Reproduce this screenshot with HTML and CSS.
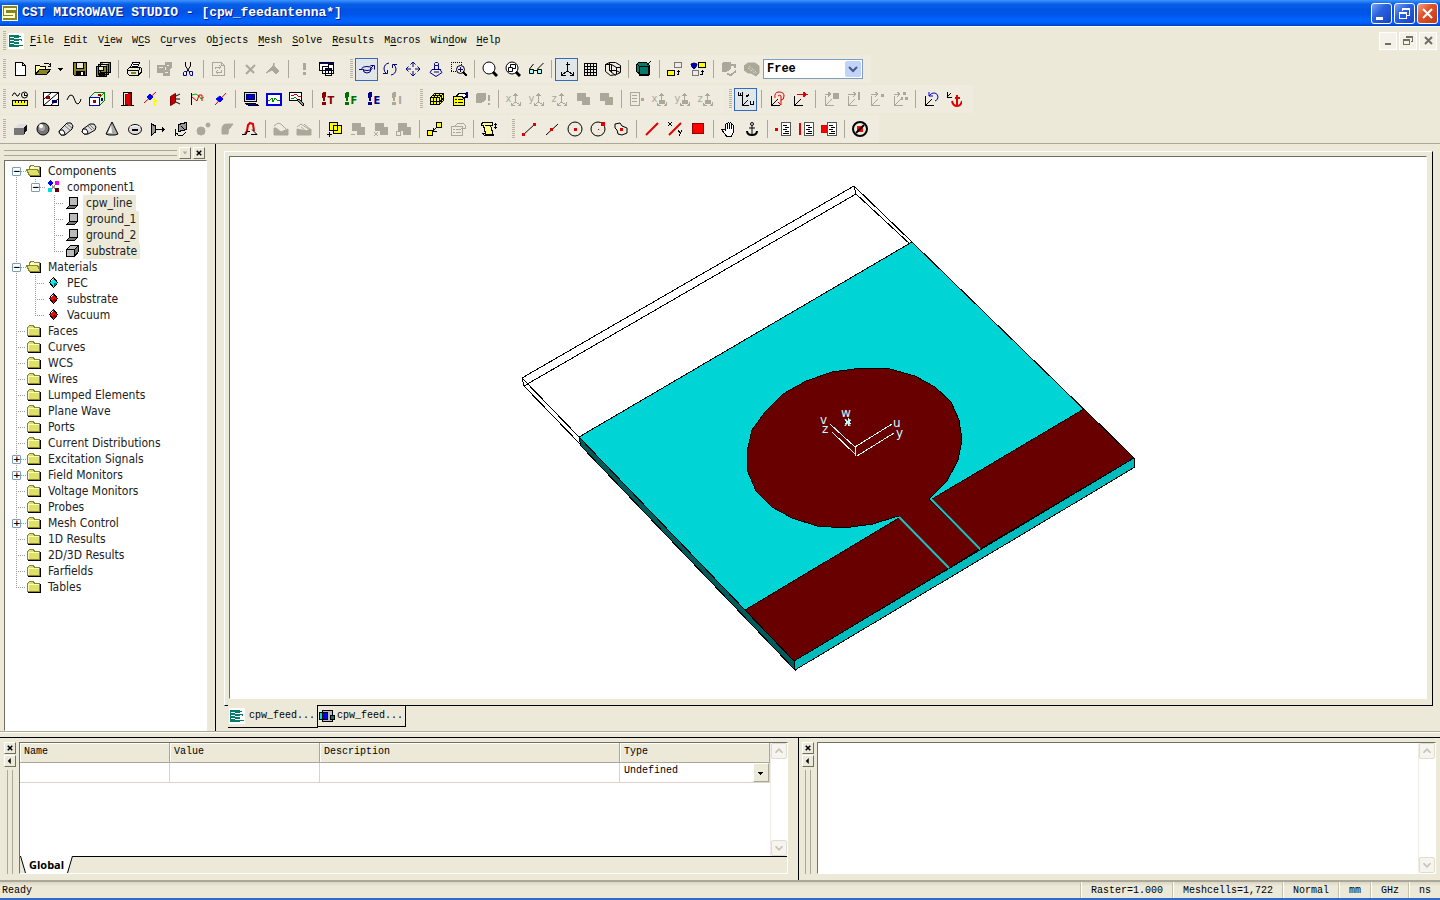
FILE: index.html
```
<!DOCTYPE html>
<html lang="en">
<head>
    <meta charset="UTF-8">
    <meta name="viewport" content="width=device-width, initial-scale=1.0">
    <title>CST MICROWAVE STUDIO - [cpw_feedantenna*]</title>
    <link rel="stylesheet" href="styles.css">
</head>
<body>
    <!-- shared icons -->
    <svg class="defs" width="0" height="0">
        <symbol id="app" viewBox="0 0 16 16"><path fill="#fff" stroke="none" d="M0 0h16v16H0z"/><path fill="#087a6c" stroke="none" d="M1 2h10v12H1z"/><path stroke="#fff" d="M2 4.500h3l2 1h7M2 7.500h3l2 1h5M2 10.500h3l2 1h7"/><path stroke="#087a6c" d="M11 3.500h2M10 6.500h3l1 1M11 12.500h4"/></symbol>
        <symbol id="folder" viewBox="0 0 16 16"><path fill="#dfe06a" stroke="#85852f" d="M1.500 12.500v-8l2-2h4l1 2h5v8z"/><path stroke="#fbfbc0" d="M2.500 11.500v-6h10"/><path stroke="#000" d="M2 13.500h12.500V5"/></symbol>
        <symbol id="open-folder" viewBox="0 0 16 16"><path fill="#fbfbc0" stroke="#85852f" d="M3.500 12.500v-8l1-2h3l1 1h5v9z"/><path fill="#dfe06a" stroke="#85852f" d="M.500 6.500h11l3 6h-11z"/><path stroke="#000" d="M4 13.500h10.500V4"/></symbol>
        <symbol id="sheet" viewBox="0 0 16 16"><path fill="#bbb" d="M5.500 2.500h8v8h-8z"/><path fill="#777" d="M5.500 10.500h8l-3 3h-8z"/></symbol>
        <symbol id="red-gem" viewBox="0 0 16 16"><path fill="#e01010" d="M8.500 2.500l4 5-4 5-4-5z"/><path stroke="#fff" stroke-dasharray="1 1" d="M6 6l2-2"/><path fill="#900" stroke="none" d="M8 8h4l-3 4z"/></symbol>
        <symbol id="axis" viewBox="0 0 16 16"><path d="M9.500 3v8M9.500 11l5 3M9.500 11l-4 3M7.500 5l2-2 2 2M14.500 11v3h-3M5.500 11.500v3h3"/></symbol>
        <symbol id="lcs" viewBox="0 0 16 16"><path d="M2.500 5v9.500H11M2.500 14.500l6-6"/></symbol>
        <symbol id="two-box" viewBox="0 0 16 16"><path fill="#aca899" d="M2.500 2.500h8v7h-8zM7.500 6.500h7v7h-7z"/></symbol>
        <symbol id="page" viewBox="0 0 16 16"><path fill="#fff" stroke="#555" d="M5.500 1.500h9v13h-9z"/><path d="M7 4.500h4M9 6.500h4M7 8.500h4M9 10.500h4M7 12.500h6"/></symbol>
        <symbol id="bang" viewBox="0 0 16 16"><path fill="currentColor" stroke="none" d="M1 3q0-2 2-2t2 2L4 10H2zM1 11h4v3H1z"/></symbol>
        <symbol id="up" viewBox="0 0 16 16"><path stroke="#c5c2b8" stroke-width="2" d="M4 10l4-4 4 4"/></symbol>
        <symbol id="down" viewBox="0 0 16 16"><path stroke="#c5c2b8" stroke-width="2" d="M4 6l4 4 4-4"/></symbol>
    </svg>

    <header class="titlebar">
        <svg class="logo" viewBox="0 0 16 16"><path fill="#8a8424" d="M0 0h16v16H0z"/><path stroke="#ffffc8" stroke-width="2" d="M14 4H3v5h9v3H1"/><path stroke="#ffffc8" d="M.500.500h15v15H.500z"/></svg>
        <h1>CST MICROWAVE STUDIO - [cpw_feedantenna*]</h1>
        <div class="window-buttons">
            <button aria-label="Minimize"><svg viewBox="0 0 19 19"><path fill="#fff" d="M4 13h7v3H4z"/></svg></button>
            <button aria-label="Restore"><svg viewBox="0 0 19 19"><path stroke="#fff" d="M7.500 7V4.500h7v7H12M7 5.500h8M4.500 8.500h7v6h-7zM4 9.500h8"/></svg></button>
            <button class="close" aria-label="Close"><svg viewBox="0 0 19 19"><path class="smooth" stroke="#fff" stroke-width="2" d="M5 5l9 9M14 5l-9 9"/></svg></button>
        </div>
    </header>

    <nav class="menubar">
        <span class="grip"></span>
        <svg class="icon"><use href="#app"/></svg>
        <button><u>F</u>ile</button>
        <button><u>E</u>dit</button>
        <button>V<u>i</u>ew</button>
        <button>W<u>C</u>S</button>
        <button>C<u>u</u>rves</button>
        <button>O<u>b</u>jects</button>
        <button><u>M</u>esh</button>
        <button><u>S</u>olve</button>
        <button><u>R</u>esults</button>
        <button>M<u>a</u>cros</button>
        <button>Win<u>d</u>ow</button>
        <button><u>H</u>elp</button>
        <div class="mdi-buttons">
            <button aria-label="Minimize document"><svg viewBox="0 0 16 16"><path stroke="#716f64" stroke-width="2" d="M5 11h6"/></svg></button>
            <button aria-label="Restore document"><svg viewBox="0 0 16 16"><path stroke="#716f64" d="M6.500 5V3.500h6v5H11M6 4.500h7M3.500 6.500h6v5h-6zM3 7.500h7"/></svg></button>
            <button aria-label="Close document"><svg viewBox="0 0 16 16"><path class="smooth" stroke="#716f64" stroke-width="2" d="M5 4l7 7M12 4l-7 7"/></svg></button>
        </div>
    </nav>

    <div class="toolbars">
        <div class="toolrow">
            <div class="bar">
                <span class="grip"></span>
                <button aria-label="New"><svg class="icon"><path fill="#fff" d="M3.500 1.500h7l3 3v10h-10zM10.500 1.500v3h3"/></svg></button>
                <button aria-label="Open"><svg class="icon"><path fill="#ffff9c" d="M.500 13.500v-9h4l1 1h5v3"/><path fill="#8a8424" d="M.500 13.500l4-5h11l-4 5z"/><path d="M9 3l2-1h2l2 2M15.500 2v3h-3"/></svg></button>
                <button class="drop" aria-label="Open recent"><svg class="arrow" viewBox="0 0 8 8"><path fill="#000" d="M1 3h5L3.500 6z"/></svg></button>
                <button aria-label="Save"><svg class="icon"><path fill="#8a8424" d="M1.500 1.500h13v13h-12l-1-1z"/><path fill="#ece9d8" d="M4.500 1.500h7v6h-7z"/><path fill="#000" d="M4 10h8v4H4z"/><path stroke="#fff" stroke-width="2" d="M10 11v3"/></svg></button>
                <button aria-label="Save all"><svg class="icon"><path fill="#8a8424" d="M5.500 1.500h10v10h-10zM3.500 3.500h10v10h-10zM1.500 5.500h10v10h-10z"/><path fill="#ece9d8" d="M3.500 5.500h5v4h-5z"/><path fill="#ece9d8" stroke="none" d="M8 2h5v1H8zM6 4h5v1H6z"/><path fill="#000" d="M4 12h5v3H4z"/></svg></button>
                <i class="sep"></i>
                <button aria-label="Print"><svg class="icon"><path fill="#fff" d="M4.500 6.500l2-5h7l-2 5z"/><path d="M7 3.500h5M6 5.500h5"/><path fill="#ece9d8" d="M1.500 8.500l2-2h11l-2 3v5h-9l-2-2zM1 9.500h11M12.500 14l3-3V7"/><path stroke="#8a8424" stroke-width="2" d="M5 12h5"/></svg></button>
                <i class="sep"></i>
                <button class="off" disabled aria-label="Paste"><svg class="icon"><path fill="#aca899" stroke="none" d="M0 4h8v8H0zM8 1h7v6l-3 2v1H9zM6 9h7v6H6z"/><path stroke="#efecdf" d="M2 6.500h4M8 11.500h3M10 4.500h2"/></svg></button>
                <button aria-label="Cut"><svg class="icon smooth"><path d="M5.500 1v4l4 6M10.500 1v4l-4 6"/><path stroke="#000084" d="M4.500 10.500h2v4h-3v-3zM9.500 10.500h3v4h-2l-1-2z"/></svg></button>
                <i class="sep"></i>
                <button class="off" disabled aria-label="Update"><svg class="icon"><path d="M1.500 1.500h9l3 3v10h-12zM10.500 1.500v3h3M4.500 8V6h5M8 4l2 2-2 2M10.500 9v2h-5M7 9l-2 2 2 2"/></svg></button>
                <i class="sep"></i>
                <button class="off" disabled aria-label="Delete"><svg class="icon smooth"><path stroke-width="2" d="M4 4l8 8M13 4l-9 9"/></svg></button>
                <button class="off" disabled aria-label="Rename"><svg class="icon smooth"><path fill="#aca899" d="M1 12l7-7 1-3v3l5 5-3 3-4-4z"/></svg></button>
                <i class="sep"></i>
                <button class="off" disabled aria-label="Abort"><svg class="icon"><path stroke-width="3" d="M8.500 2v7M8.500 11v3"/></svg></button>
                <button aria-label="Windows"><svg class="icon"><path fill="#fff" d="M.500 1.500h14v8H.500zM3.500 5.500h6v7h-6zM9.500 3.500h5v9h-5zM6.500 7.500h6v7h-6z"/><path stroke="#000084" d="M1 2.500h13M7 8.500h5"/></svg></button>
            </div>
            <div class="bar">
                <span class="grip"></span>
                <button class="on" aria-label="Rotate"><svg class="icon blue"><ellipse cx="8" cy="7.500" rx="5" ry="2"/><path d="M4 8q0 4 4 4t4-4M0 8.500h3M11 8l4-4M11.500 4.500h4v4"/></svg></button>
                <button aria-label="Rotate in plane"><svg class="icon blue"><path d="M7 2q-5 1-5 6 0 3 3 5M1 12.500h4.500V9M9 14q5-1 5-6 0-3-3-5M15 3.500h-4.500V7"/></svg></button>
                <button aria-label="Pan"><svg class="icon blue"><path d="M8 1v5M8 10v5M1 8h5M10 8h5M5.500 3.500L8 1l2.500 2.500M5.500 12.500L8 15l2.500-2.500M3.500 5.500L1 8l2.500 2.500M12.500 5.500L15 8l-2.500 2.500"/></svg></button>
                <button aria-label="Zoom dynamic"><svg class="icon blue"><path d="M6.500 4.500v-2l1-1h2l1 1v2zM6.500 5v3M10.500 5v3M4 8.500h9M4 8.500l-2 3 6 4 6-4-2-3M6 11h5"/></svg></button>
                <button aria-label="Zoom window"><svg class="icon"><path stroke-dasharray="1 1" d="M0 1.500h11M.500 1v10M0 10.500h5M10.500 1v3"/><circle class="smooth" cx="9.500" cy="8.500" r="4"/><path stroke="#000084" d="M7 8.500h5M9.500 6v5"/><path stroke-width="2" d="M12 11l4 4"/></svg></button>
                <i class="sep"></i>
                <button aria-label="Zoom"><svg class="icon smooth"><circle cx="7" cy="7" r="6" fill="#fff"/><path stroke-width="3" d="M11 11l4 4"/></svg></button>
                <button aria-label="Reset view"><svg class="icon smooth"><circle cx="7" cy="7" r="6" fill="#fff"/><path d="M3.500 6.500h4v4h-4zM5.500 6V3.500h5v4H8"/><path stroke-width="3" d="M11 11l4 4"/></svg></button>
                <button aria-label="View options"><svg class="icon smooth"><path d="M1.500 8l4-5M9.500 8l6-6M6 9.500h3"/><path fill="#9ff" d="M1.500 8.500h4v4h-4zM9.500 8.500h4v4h-4z"/></svg></button>
                <i class="sep"></i>
                <button class="on" aria-label="Axes"><svg class="icon"><path d="M8.500 1v9l-6 4M8.500 10l6 4M6.500 3.500h4M2.500 10.500v3.500h4M14.500 10.500v3.500h-4"/></svg></button>
                <button aria-label="Working plane"><svg class="icon"><path d="M2.500 2v12.500h12V2.500H2M5.500 2v12M8.500 2v12M11.500 2v12M2 5.500h12M2 8.500h12M2 11.500h12"/></svg></button>
                <button aria-label="Wireframe"><svg class="icon smooth"><path d="M.500 3.500l4-2h6l5 3v7l-4 2-6 1-5-4zM.500 3.500h6l5 3v7M4.500 1.500v8l6 5M6.500 3.500v8M4 9.500h7l4 2M11 6.500h4"/></svg></button>
                <i class="sep"></i>
                <button aria-label="Cutting plane"><svg class="icon"><path fill="#087a6c" d="M.500 3.500l2-2h8l3 3v9h-9l-4-3zM3.500 5.500h9v9h-9zM1 3.500l3 2"/><path d="M11 4l4-4"/></svg></button>
                <i class="sep"></i>
                <button aria-label="Transform"><svg class="icon"><path stroke="#777" d="M7.500 1.500h7v5h-7z"/><path fill="#ff0" d="M.500 9.500h7v5h-7z"/><path d="M10 13.500h1.500V9M10 10.500h3"/></svg></button>
                <button aria-label="Assign material"><svg class="icon"><path class="smooth" fill="#00c" stroke="#006" d="M1 3l3-1 3 1-1 3-2 2-2-2z"/><path fill="#ff0" d="M8.500 1.500h7v5h-7z"/><path stroke="#777" d="M2.500 9.500h6v5h-6z"/><path d="M10 13.500h2.500V9M11 10.500h3"/></svg></button>
                <i class="sep"></i>
                <button class="off" disabled aria-label="History"><svg class="icon"><path fill="#aca899" d="M1 3l3-2h5v7l-3 2H1z"/><path stroke-width="2" d="M10 4h4v3M6 13l4 1 5-4"/></svg></button>
                <button class="off" disabled aria-label="Mesh view"><svg class="icon smooth"><path fill="#aca899" d="M0 5l4-3h7l4 3v7l-3 3-5-3H4L0 9z"/><path stroke="#ece9d8" stroke-dasharray="1 1" d="M5 5l8 7M4 7l8 6"/></svg></button>
                <div class="combo">
                    <select aria-label="View"><option>Free</option></select>
                    <span class="combo-arrow"><svg viewBox="0 0 16 16"><path class="smooth" stroke="#445a85" stroke-width="2" d="M4 6l4 4 4-4"/></svg></span>
                </div>
            </div>
        </div>

        <div class="toolrow">
            <div class="bar">
                <span class="grip"></span>
                <button aria-label="Units"><svg class="icon"><path class="smooth" d="M0 5l2-3h1l2 3h1l2-3"/><circle class="smooth" cx="12.500" cy="4" r="3"/><path d="M12.500 2v2h2"/><path fill="#ff0" d="M.500 9.500h15v5H.500z"/><path d="M3.500 10v2M6.500 10v2M9.500 10v2M12.500 10v2"/></svg></button>
                <i class="sep"></i>
                <button aria-label="Background"><svg class="icon"><path fill="#fff" d="M.500 1.500h15v13H.500z"/><path class="smooth" d="M1 14L15 2M1 8l7-6M8 14l7-6"/><path fill="#c00" stroke="#700" d="M3 5h3v2H3z"/><path fill="#006" stroke="#006" d="M9 9h4v2H9z"/></svg></button>
                <button aria-label="Frequency"><svg class="icon"><path class="smooth" d="M1 9l2-4 2-1 2 1 3 7 2 1 2-2 1-3"/></svg></button>
                <button aria-label="Boundaries"><svg class="icon"><path fill="#fff" stroke="#00c" d="M.500 6.500h10v8H.500z"/><path stroke="#080" d="M.500 6.500l5-5h10l-5 5M15.500 1.500v8l-5 5"/><path fill="#900" stroke="#900" d="M4 9h2v2H4zM9 3h2v1H9z"/><path fill="#006" stroke="#006" d="M12 7h1v2h-1z"/></svg></button>
                <i class="sep"></i>
                <button aria-label="Port"><svg class="icon"><path d="M3.500 14V1.500h8V14M1 14.500h13"/><path fill="#e00000" stroke="#900" d="M5.500 3.500l5-1v12l-5-1z"/></svg></button>
                <button aria-label="Discrete port"><svg class="icon"><path class="smooth" stroke="#e00000" d="M1 12L13 1"/><path class="smooth" fill="#00f" stroke="#00f" d="M7 3l3 3-3 3-3-3z"/><path stroke="#ff0" stroke-width="2" d="M11 8l2 2-2 2 1 3"/></svg></button>
                <button aria-label="Lumped element"><svg class="icon smooth"><path fill="#c00000" stroke="#700" d="M4.500 5.500l5-3v9l-5 3z"/><path d="M10 5l4-2M10 8h4M10 11l4 2"/></svg></button>
                <button aria-label="Monitor"><svg class="icon smooth"><path d="M2.500 2v12"/><path stroke="#00b000" d="M3 4l4-1 3 2 2 3 3-2"/><path stroke="#e00000" d="M3 6l5 4 2-6h3v6"/></svg></button>
                <button aria-label="Probe"><svg class="icon smooth"><path stroke="#e00000" d="M3 14L14 2"/><path fill="#00f" stroke="#00f" d="M8 5l3 3-3 3-4-3z"/></svg></button>
                <i class="sep"></i>
                <button aria-label="Solver monitor"><svg class="icon"><path fill="#ddd" d="M1.500 1.500h12v9h-12z"/><path fill="#00c" stroke="#006" d="M3.500 3.500h8v5h-8z"/><path fill="#00c" d="M2.500 12.500h10l3 2h-10z"/></svg></button>
                <button aria-label="Field monitor"><svg class="icon"><path fill="#fff" stroke="#00d" stroke-width="2" d="M1 3h14v11H1z"/><path stroke="#080" d="M2 9h2l2-2 1 4 2-4 2 2h3"/></svg></button>
                <button aria-label="Signal"><svg class="icon"><path fill="#fff" d="M.500 1.500h12v8H.500z"/><path stroke="#c00" d="M2 4h3l2-1 2 2h3"/><path stroke="#080" d="M2 7h3l1-1 2 2h3"/><path fill="#999" d="M8 9l2-1 5 5-1 2z"/></svg></button>
                <i class="sep"></i>
                <button class="solver red" aria-label="Transient solver"><svg class="icon"><use href="#bang"/></svg><b>T</b></button>
                <button class="solver green" aria-label="Frequency solver"><svg class="icon"><use href="#bang"/></svg><b>F</b></button>
                <button class="solver navy" aria-label="Eigenmode solver"><svg class="icon"><use href="#bang"/></svg><b>E</b></button>
                <button class="solver gray" disabled aria-label="Integral solver"><svg class="icon"><use href="#bang"/></svg><b>I</b></button>
            </div>
            <div class="bar">
                <span class="grip"></span>
                <button aria-label="Mesh"><svg class="icon"><path fill="#ff0" d="M1.500 6.500l4-4h9v7l-4 4h-9zM1.500 6.500h9v7M10.500 6.500l4-4M4.500 6.500v7M7.500 6.500v7M2 10.500h9l3-3M4 4.500h9M7.500 2.500l-3 4M11.500 2.500l-4 4M12.500 5v7"/></svg></button>
                <button aria-label="Mesh properties"><svg class="icon"><path fill="#ff0" d="M1.500 5.500h11v9h-11z"/><path d="M3 8.500h2M6 8.500h5M3 11.500h2M6 11.500h5"/><path fill="#fff" d="M4.500 5l3-3h5l3 3-4 2-2-2z"/><path stroke="#000084" stroke-width="2" d="M15 1v6"/></svg></button>
                <button class="off" disabled aria-label="Mesh update"><svg class="icon"><path fill="#aca899" d="M1 4l2-2h7v7l-3 2H1z"/><path stroke-width="2" d="M14 4v6M14 12v2"/></svg></button>
                <i class="sep"></i>
                <button class="off axis" disabled aria-label="X plane"><small>x</small><svg class="icon"><use href="#axis"/></svg></button>
                <button class="off axis" disabled aria-label="Y plane"><small>y</small><svg class="icon"><use href="#axis"/></svg></button>
                <button class="off axis" disabled aria-label="Z plane"><small>z</small><svg class="icon"><use href="#axis"/></svg></button>
                <button class="off" disabled aria-label="Previous plane"><svg class="icon"><use href="#two-box"/></svg></button>
                <button class="off" disabled aria-label="Next plane"><svg class="icon"><use href="#two-box"/></svg></button>
                <i class="sep"></i>
                <button class="off" disabled aria-label="Mesh list"><svg class="icon"><path d="M1.500 1.500h9v13h-9zM3 4.500h5M3 7.500h5M3 10.500h5"/><path stroke-width="3" d="M12 8.500h3"/></svg></button>
                <button class="off axis" disabled aria-label="X fixpoint"><small>x</small><svg class="icon"><use href="#axis"/><path fill="#aca899" d="M7 9h5v3H7z"/></svg></button>
                <button class="off axis" disabled aria-label="Y fixpoint"><small>y</small><svg class="icon"><use href="#axis"/><path fill="#aca899" d="M7 9h5v3H7z"/></svg></button>
                <button class="off axis" disabled aria-label="Z fixpoint"><small>z</small><svg class="icon"><use href="#axis"/><path fill="#aca899" d="M7 9h5v3H7z"/></svg></button>
            </div>
            <div class="bar">
                <span class="grip"></span>
                <button class="on" aria-label="Local WCS"><svg class="icon"><path d="M4.500 5v9.500H11M4.500 14.500l5-5M.500 1v3h4V1M2.500 2v2M8 4l1 2 2-3M12.500 10v3.500h3V10"/></svg></button>
                <i class="sep"></i>
                <button aria-label="Rotate WCS"><svg class="icon"><use href="#lcs"/><path class="smooth" stroke="#e00000" d="M6 7q-1-6 4-6t5 4q0 4-3 4M9 5q3-2 3 1v8M9 11l3 3"/></svg></button>
                <button aria-label="Move WCS"><svg class="icon"><use href="#lcs"/><path fill="#e00000" stroke="#e00000" d="M5 3.500h9M11 1v5l4-2.500z"/></svg></button>
                <i class="sep"></i>
                <button class="off" disabled aria-label="Align WCS face"><svg class="icon"><use href="#lcs"/><path fill="#aca899" d="M10 2h5v5h-5zM2 3.500h5M5 1l3 2-3 3"/></svg></button>
                <button class="off" disabled aria-label="Align WCS edge"><svg class="icon"><use href="#lcs"/><path d="M13.500 1v8M12.500 1v8M2 3.500h7M7 1l3 2-3 3"/></svg></button>
                <button class="off" disabled aria-label="Align WCS point"><svg class="icon"><use href="#lcs"/><path d="M2 3.500h6M6 1l3 2-3 3"/><path fill="#aca899" d="M12 3h2v2h-2z"/></svg></button>
                <button class="off" disabled aria-label="Align WCS three points"><svg class="icon"><use href="#lcs"/><path d="M2 3.500h5M5 1l3 2-3 3"/><path fill="#aca899" d="M11 1h2v2h-2zM13 6h2v2h-2zM9 6h1v2H9z"/></svg></button>
                <i class="sep"></i>
                <button aria-label="Undo WCS"><svg class="icon"><use href="#lcs"/><path class="smooth" stroke="#00d" d="M6 5q3-4 6-3t3 4q0 3-3 4M6 1v4h4"/></svg></button>
                <button aria-label="Anchor WCS"><svg class="icon"><path d="M1.500 1v5.500H6M1 6l4-4"/><path class="smooth" stroke="#e00000" stroke-width="2" d="M11 4v11M9 7h5M6 10q1 5 5 5t5-5"/></svg></button>
            </div>
        </div>

        <div class="toolrow">
            <div class="bar">
                <span class="grip"></span>
                <button aria-label="Brick"><svg class="icon"><path fill="#ddd" stroke="none" d="M2 7l4-4h9l-3 4z"/><path fill="#777" stroke="none" d="M2 7h10v7H2z"/><path fill="#111" stroke="none" d="M12 7l3-4v6l-3 5z"/></svg></button>
                <button aria-label="Sphere"><svg class="icon smooth"><circle cx="8" cy="8" r="6" fill="#777"/><circle cx="7" cy="7" r="3" fill="#aaa" stroke="none"/><circle cx="6" cy="5" r="2" fill="#fff" stroke="none"/></svg></button>
                <button aria-label="Cylinder"><svg class="icon smooth"><path fill="#ddd" d="M2 9l7-7 4 0 2 3-1 3-7 6-4 0-2-3z"/><path stroke="#777" d="M7 5l5 4M9 3l5 4"/><path fill="#fff" d="M2 9h3l2 3-1 2H3l-2-3z"/></svg></button>
                <button aria-label="Elliptical cylinder"><svg class="icon smooth"><path fill="#ddd" d="M2 8l7-5 4 0 2 3-1 3-7 4-4 0-2-2z"/><path stroke="#777" d="M7 5l4 4M9 4l4 4"/><path fill="#fff" d="M2 8h3l2 3-1 2H3l-2-2z"/></svg></button>
                <button aria-label="Cone"><svg class="icon smooth"><path fill="#aaa" d="M8 1L2 13l3 1h6l3-1z"/><path fill="#fff" stroke="none" d="M7 4L4 12h4z"/></svg></button>
                <button aria-label="Torus"><svg class="icon smooth"><ellipse cx="8" cy="8.500" rx="6.500" ry="5" fill="#ddd"/><path stroke-width="2" d="M5 9h6"/><path stroke="#fff" d="M3 6q5-3 10 0"/></svg></button>
                <button aria-label="Extrude"><svg class="icon"><path fill="#999" d="M1.500 3v11l4-3V5z"/><path d="M5 8.500h9"/><path fill="#000" d="M12.500 6.500v4l2-2z"/></svg></button>
                <button aria-label="Rotate profile"><svg class="icon"><path fill="#999" d="M5.500 3.500l8-2v7l-8 2z"/><path d="M3 8l-1 3 3 3h5l3-3M2 15v-3h3M8 5l3 3"/></svg></button>
                <button class="off" disabled aria-label="Loft"><svg class="icon smooth"><circle cx="5" cy="10" r="4" fill="#aca899"/><circle cx="12" cy="4" r="2" fill="#aca899"/></svg></button>
                <button class="off" disabled aria-label="Bend"><svg class="icon smooth"><path fill="#aca899" d="M3 8q0-5 5-5h6l-3 4q-2 0-2 6H3z"/></svg></button>
                <button aria-label="Bond wire"><svg class="icon smooth"><path stroke="#e00000" stroke-width="2" d="M3 13l2-3 1-6 2-2 3 1 1 7"/><path d="M0 13.500h4l1-3h3M10 8.500l5 5h-6"/></svg></button>
                <i class="sep"></i>
                <button class="off" disabled aria-label="Chamfer"><svg class="icon smooth"><path fill="#aca899" d="M1 7h2l5 4 7-3v6H1z"/><path d="M1 5l4-3 3 1 5 5"/></svg></button>
                <button class="off" disabled aria-label="Blend"><svg class="icon smooth"><path fill="#aca899" d="M1 8l9 2 5-2v6H1z"/><path d="M1 6l4-3 9 6M5 6l6 5M8 3l6 5"/></svg></button>
                <i class="sep"></i>
                <button aria-label="Boolean add"><svg class="icon"><path fill="#ff0" d="M2.500 1.500h8v8h-8zM6.500 4.500h8v8h-8z"/><path d="M6.500 4.500h4v5h-4zM0 13.500h5M2.500 11v5"/></svg></button>
                <button class="off" disabled aria-label="Boolean subtract"><svg class="icon"><use href="#two-box"/><path d="M1 13.500h4"/></svg></button>
                <button class="off" disabled aria-label="Boolean intersect"><svg class="icon"><use href="#two-box"/><path d="M1 11l4 4M5 11l-4 4"/></svg></button>
                <button class="off" disabled aria-label="Boolean insert"><svg class="icon"><use href="#two-box"/><path d="M.500 10.500h4v4h-4z"/></svg></button>
                <i class="sep"></i>
                <button aria-label="Transform shape"><svg class="icon"><path fill="#ff0" d="M.500 9.500h5v5h-5zM9.500 1.500h5v5h-5z"/><path d="M6 9.500l3-2M6.500 7v3h3"/></svg></button>
                <button class="off" disabled aria-label="Shape properties"><svg class="icon"><path d="M1.500 5.500h11v9h-11zM3 8.500h2M6 8.500h5M3 11.500h2M6 11.500h5M5 5l3-3h5l2 2v3h-4"/></svg></button>
                <i class="sep"></i>
                <button aria-label="History list"><svg class="icon"><path fill="#ff8" d="M.500 2.500l2-1h9v3h-2l3 10h-9l-2-2h3l-2-8h-2z"/><path d="M4 4.500h6M4 13.500h8M14.500 2v6M13 3.500h3M13 6.500h3"/></svg></button>
            </div>
            <div class="bar">
                <span class="grip"></span>
                <button aria-label="Pick edge endpoint"><svg class="icon"><path class="smooth" d="M2 14L14 3"/><path fill="#e00000" stroke="#e00000" d="M1.500 12.500h2v2h-2zM12.500 2.500h2v2h-2z"/></svg></button>
                <button aria-label="Pick edge midpoint"><svg class="icon"><path class="smooth" d="M2 14L14 3"/><path fill="#e00000" stroke="#e00000" d="M6.500 7.500h2v2h-2z"/></svg></button>
                <button aria-label="Pick circle center"><svg class="icon smooth"><circle cx="8" cy="8" r="7"/><path fill="#e00000" d="M7 7h3v3H7z" stroke="none"/></svg></button>
                <button aria-label="Pick point on circle"><svg class="icon smooth"><circle cx="8" cy="8" r="7"/><path fill="#e00000" d="M11 1h4v4h-4zM8 8h1v1H8z" stroke="none"/></svg></button>
                <button aria-label="Pick face center"><svg class="icon smooth"><path d="M2 3l5-1 2 3 5 2v5l-5 2-4-1-1-4-2-2z"/><path fill="#e00000" d="M7 7h3v3H7z" stroke="none"/></svg></button>
                <i class="sep"></i>
                <button aria-label="Pick edge"><svg class="icon smooth"><path stroke="#e00000" stroke-width="2" d="M2 14L14 2"/></svg></button>
                <button aria-label="Pick by coordinates"><svg class="icon"><path d="M1 1l4 4M5 1L1 5M11 9l2 3M15 9l-3 6"/><path class="smooth" stroke="#e00000" stroke-width="2" d="M2 14L14 2"/></svg></button>
                <button aria-label="Pick face"><svg class="icon"><path fill="red" stroke="#900" d="M2.500 2.500h11v10h-11z"/></svg></button>
                <i class="sep"></i>
                <button aria-label="Pick"><svg class="icon"><path fill="#fff" d="M4.500 9V3.500l1-1 1 1V8 2.500l1-1 1 1V8 2.500l1-1 1 1V8 4.500l1-1 1 1V11l-2 4h-5l-4-5-1-2h2z"/></svg></button>
                <button aria-label="Anchor"><svg class="icon smooth"><circle cx="8" cy="3" r="1.500"/><path d="M8 5v9M5 7h6"/><path stroke-width="2" d="M3 10q0 4 5 4t5-4"/></svg></button>
                <i class="sep"></i>
                <button aria-label="Pick points list"><svg class="icon"><path fill="#e00000" stroke="#e00000" d="M0 7h2v2H0z"/><use href="#page" x="1"/></svg></button>
                <button aria-label="Pick edges list"><svg class="icon"><path stroke="#e00000" stroke-width="2" d="M2 2v12"/><use href="#page" x="1"/></svg></button>
                <button aria-label="Pick faces list"><svg class="icon"><path fill="red" stroke="#e00000" d="M0 4h5v7H0z"/><use href="#page" x="1"/></svg></button>
                <i class="sep"></i>
                <button aria-label="Clear picks"><svg class="icon smooth"><path fill="red" stroke="none" d="M5 5h6v6H5z"/><circle cx="8" cy="8" r="7" stroke-width="2"/><path stroke-width="2" d="M4 12l8-8"/></svg></button>
            </div>
        </div>
    </div>

    <div class="workspace">
        <aside class="tree-pane">
            <div class="pane-head">
                <span class="lines"></span>
                <button class="mini" disabled aria-label="Expand"><svg viewBox="0 0 8 8"><path fill="#aca899" d="M1 2h6L4 6z"/></svg></button>
                <button class="mini" aria-label="Close tree"><svg viewBox="0 0 8 8"><path stroke="#000" stroke-width="2" d="M1 1l6 6M7 1L1 7"/></svg></button>
            </div>
            <ul class="tree">
                <li><i class="first"><button aria-label="Collapse">−</button></i><svg class="icon"><use href="#open-folder"/></svg><span>Components</span></li>
                <li><i class="v"></i><i class="last"><button aria-label="Collapse">−</button></i><svg class="icon"><path stroke="#999" d="M5 4l7 8M5 12l7-8"/><path fill="#00e" stroke="none" d="M5 1l3 3-3 3-3-3z"/><path fill="#e0e" stroke="none" d="M10 2h4v4h-4z"/><path fill="#0dd" stroke="none" d="M3 9h4v4H3z"/><path fill="#600" stroke="none" d="M10 9h4v4h-4z"/></svg><span>component1</span></li>
                <li><i class="v"></i><i></i><i class="t"></i><svg class="icon"><use href="#sheet"/></svg><span class="sel">cpw_line</span></li>
                <li><i class="v"></i><i></i><i class="t"></i><svg class="icon"><use href="#sheet"/></svg><span class="sel">ground_1</span></li>
                <li><i class="v"></i><i></i><i class="t"></i><svg class="icon"><use href="#sheet"/></svg><span class="sel">ground_2</span></li>
                <li><i class="v"></i><i></i><i class="last"></i><svg class="icon"><path fill="#bbb" d="M2.500 6.500l4-4h8v6l-4 5h-8zM2.500 6.500h8v7M10.500 6.500l4-4"/><path fill="#777" d="M10.500 6.500l4-4v6l-4 5z"/></svg><span class="sel">substrate</span></li>
                <li><i class="t"><button aria-label="Collapse">−</button></i><svg class="icon"><use href="#open-folder"/></svg><span>Materials</span></li>
                <li><i class="v"></i><i class="t"></i><svg class="icon"><path fill="#0ee" d="M8.500 2.500l4 5-4 5-4-5z"/><path fill="#077" stroke="none" d="M9 8h3l-3 4z"/><path stroke="#fff" stroke-dasharray="1 1" d="M6 6l2-2"/></svg><span>PEC</span></li>
                <li><i class="v"></i><i class="t"></i><svg class="icon"><use href="#red-gem"/></svg><span>substrate</span></li>
                <li><i class="v"></i><i class="last"></i><svg class="icon"><use href="#red-gem"/></svg><span>Vacuum</span></li>
                <li><i class="t"></i><svg class="icon"><use href="#folder"/></svg><span>Faces</span></li>
                <li><i class="t"></i><svg class="icon"><use href="#folder"/></svg><span>Curves</span></li>
                <li><i class="t"></i><svg class="icon"><use href="#folder"/></svg><span>WCS</span></li>
                <li><i class="t"></i><svg class="icon"><use href="#folder"/></svg><span>Wires</span></li>
                <li><i class="t"></i><svg class="icon"><use href="#folder"/></svg><span>Lumped Elements</span></li>
                <li><i class="t"></i><svg class="icon"><use href="#folder"/></svg><span>Plane Wave</span></li>
                <li><i class="t"></i><svg class="icon"><use href="#folder"/></svg><span>Ports</span></li>
                <li><i class="t"></i><svg class="icon"><use href="#folder"/></svg><span>Current Distributions</span></li>
                <li><i class="t"><button aria-label="Expand">+</button></i><svg class="icon"><use href="#folder"/></svg><span>Excitation Signals</span></li>
                <li><i class="t"><button aria-label="Expand">+</button></i><svg class="icon"><use href="#folder"/></svg><span>Field Monitors</span></li>
                <li><i class="t"></i><svg class="icon"><use href="#folder"/></svg><span>Voltage Monitors</span></li>
                <li><i class="t"></i><svg class="icon"><use href="#folder"/></svg><span>Probes</span></li>
                <li><i class="t"><button aria-label="Expand">+</button></i><svg class="icon"><use href="#folder"/></svg><span>Mesh Control</span></li>
                <li><i class="t"></i><svg class="icon"><use href="#folder"/></svg><span>1D Results</span></li>
                <li><i class="t"></i><svg class="icon"><use href="#folder"/></svg><span>2D/3D Results</span></li>
                <li><i class="t"></i><svg class="icon"><use href="#folder"/></svg><span>Farfields</span></li>
                <li><i class="last"></i><svg class="icon"><use href="#folder"/></svg><span>Tables</span></li>
            </ul>
        </aside>

        <main class="document">
            <div class="frame">
                <div class="canvas">
                    <svg viewBox="230 157 1196 541">
                        <!-- vacuum box behind the ground -->
                        <path d="M912 242L854 186 522 378l57 59M911 245l-55-51-332 192 57 59M854 186l2 8M522 378l2 8"/>
                        <!-- substrate -->
                        <path fill="#00d4d4" d="M912 242l222 216-340 203-215-224z"/>
                        <path fill="#00bcbc" d="M794 661l340-203 1 9-340 203z"/>
                        <path fill="#005c5c" d="M579 437l215 224 1 9-214-224z"/>
                        <!-- ground planes -->
                        <path fill="#680000" d="M745 610l154-92 50 50-155 93z"/>
                        <path fill="#680000" d="M1084 409l50 49-154 91-48-50z"/>
                        <!-- disc and feed line -->
                        <path fill="#680000" d="M747 452L752 430 765 412 783 394 806 381 832 372 862 368 890 369 915 376 935 387 951 402 959 420 962 440 958 460 947 481 929 499 979 549 950 568 898 516 873 524 844 528 817 526 792 518 772 507 756 491 748 472z"/>
                        <path class="slot" d="M899 517l50 51M931 499l49 50"/>
                        <path class="axes" d="M830 424l25 23M832 432l24 23M855 447l37-23M857 456l37-23M855 447l1 9M848 418v8M845 424l6-4M845 420l6 4"/>
                        <g class="axis-text">
                            <text x="893" y="427">u</text>
                            <text x="896" y="437">y</text>
                            <text x="820" y="424">v</text>
                            <text x="822" y="433">z</text>
                            <text x="841" y="417">w</text>
                            <text x="844" y="426">x</text>
                        </g>
                    </svg>
                </div>
            </div>
            <div class="doc-tabs">
                <button class="active"><svg class="icon"><use href="#app"/></svg>cpw_feed...</button>
                <button><svg class="icon"><path fill="#0dd" d="M.500 4.500h5v7h-5zM12.500 7.500h3v4h-3z"/><path fill="#bbb" d="M3.500 2.500h10v11h-10z"/><path fill="#00e" d="M3.500 4.500h5v7h-5z"/><path fill="#087a6c" d="M11.500 7.500h4v4h-4z"/></svg>cpw_feed...</button>
            </div>
        </main>
    </div>
    <div class="splitter"></div>

    <div class="bottom">
        <section class="params">
            <div class="side-head">
                <button class="mini" aria-label="Close parameters"><svg viewBox="0 0 8 8"><path stroke="#000" stroke-width="2" d="M1 1l6 6M7 1L1 7"/></svg></button>
                <button class="mini" aria-label="Dock parameters"><svg viewBox="0 0 8 8"><path fill="#000" d="M5 0v8L1 4z"/></svg></button>
                <span class="lines"></span>
            </div>
            <div class="param-box">
                <div class="param-body">
                    <table>
                        <thead>
                            <tr><th>Name</th><th>Value</th><th class="wide">Description</th><th>Type</th></tr>
                        </thead>
                        <tbody>
                            <tr>
                                <td><input type="text" aria-label="Name"></td>
                                <td><input type="text" aria-label="Value"></td>
                                <td><input type="text" aria-label="Description"></td>
                                <td>
                                    <div class="type">
                                        <select aria-label="Type"><option>Undefined</option></select>
                                        <span><svg class="arrow" viewBox="0 0 8 8"><path fill="#000" d="M1 3h5L3.500 6z"/></svg></span>
                                    </div>
                                </td>
                            </tr>
                        </tbody>
                    </table>
                    <div class="scroll">
                        <button aria-label="Scroll up"><svg class="icon"><use href="#up"/></svg></button>
                        <button aria-label="Scroll down"><svg class="icon"><use href="#down"/></svg></button>
                    </div>
                </div>
                <div class="sheet-tabs">
                    <button><svg viewBox="0 0 6 17"><path fill="#fff" d="M0 0h6v17z"/><path stroke="#000" d="M.500 0l5 17"/></svg><b>Global</b><svg viewBox="0 0 6 17"><path fill="#fff" d="M0 0h6L0 17z"/><path stroke="#000" d="M5.500 0l-5 17"/></svg></button>
                </div>
            </div>
        </section>
        <section class="messages">
            <div class="side-head">
                <button class="mini" aria-label="Close messages"><svg viewBox="0 0 8 8"><path stroke="#000" stroke-width="2" d="M1 1l6 6M7 1L1 7"/></svg></button>
                <button class="mini" aria-label="Dock messages"><svg viewBox="0 0 8 8"><path fill="#000" d="M5 0v8L1 4z"/></svg></button>
                <span class="lines"></span>
            </div>
            <div class="message-box">
                <textarea aria-label="Messages"></textarea>
                <div class="scroll">
                    <button aria-label="Scroll up"><svg class="icon"><use href="#up"/></svg></button>
                    <button aria-label="Scroll down"><svg class="icon"><use href="#down"/></svg></button>
                </div>
            </div>
        </section>
    </div>

    <footer class="statusbar">
        <p>Ready</p>
        <span>Raster=1.000</span>
        <span>Meshcells=1,722</span>
        <span>Normal</span>
        <span>mm</span>
        <span>GHz</span>
        <span>ns</span>
    </footer>
</body>
</html>
```

FILE: styles.css
```
* {
box-sizing: border-box;
}

body {
margin: 0;
height: 100vh;
display: flex;
flex-direction: column;
overflow: hidden;
background: #ece9d8;
color: #000;
font: 10px/16px "Liberation Mono", monospace;
}

button, input, select, textarea {
margin: 0;
padding: 0;
border: none;
border-radius: 0;
background: none;
color: inherit;
font: inherit;
outline: none;
}

svg {
display: block;
flex: none;
fill: none;
shape-rendering: crispEdges;
}

.defs {
position: absolute;
}

.smooth {
shape-rendering: auto;
}

.icon {
width: 16px;
height: 16px;
stroke: #000;
}

.blue {
stroke: #000084;
shape-rendering: auto;
}

/* title bar */
.titlebar {
flex: none;
height: 26px;
display: flex;
align-items: center;
gap: 4px;
padding: 0 2px;
background: linear-gradient(#3d95ff 0, #0a5fe8 4px, #0054e3 10px, #0055ea 14px, #0064fe 20px, #0060f8 23px, #003dc0 26px);
}

.titlebar .logo {
width: 16px;
height: 16px;
}

.titlebar h1 {
flex: 1;
margin: 0;
color: #fff;
font-size: 13px;
font-weight: bold;
text-shadow: 1px 1px #0a1883;
white-space: nowrap;
}

.window-buttons {
display: flex;
gap: 2px;
}

.window-buttons button {
width: 21px;
height: 21px;
border: 1px solid #fff;
border-radius: 3px;
background: linear-gradient(135deg, #7ba2f0, #2b62e0 40%, #1941c5);
}

.window-buttons .close {
background: linear-gradient(135deg, #f0a086, #e0532b 40%, #c03a10);
}

.window-buttons svg {
width: 19px;
height: 19px;
}

/* menu bar */
.menubar {
flex: none;
height: 28px;
display: flex;
align-items: center;
border-top: 1px solid #fff;
padding-right: 3px;
}

.menubar .icon {
margin-right: 1px;
}

.menubar > button {
padding: 0 5px;
}

.menubar u {
text-underline-offset: 2px;
}

.mdi-buttons {
display: flex;
gap: 2px;
margin-left: auto;
}

.mdi-buttons button {
width: 18px;
height: 18px;
border: 1px solid #fff;
background: #f3f1e8;
}

.mdi-buttons svg {
width: 16px;
height: 16px;
}

/* tool bars */
.grip {
flex: none;
width: 4px;
height: 20px;
margin: 0 1px 0 3px;
background: repeating-linear-gradient(#b5b2a2 0 1px, transparent 1px 2px);
background-size: 3px 100%;
background-repeat: no-repeat;
}

.toolbars {
flex: none;
border-bottom: 1px solid #aca899;
}

.toolrow {
display: flex;
gap: 1px;
height: 30px;
align-items: center;
}

.toolrow:last-child {
height: 29px;
}

.bar {
display: flex;
align-items: center;
height: 28px;
padding-right: 8px;
border-radius: 2px;
background: #efecdf;
}

.bar > button {
flex: none;
display: flex;
align-items: center;
justify-content: center;
width: 23px;
height: 23px;
}

.bar > .drop {
width: 14px;
}

.bar > .on {
border: 1px solid #316ac5;
background: #e1e6e8;
}

.bar .off .icon {
stroke: #aca899;
}

.bar > .axis {
display: grid;
justify-content: center;
align-content: center;
color: #aca899;
}

.axis small, .axis svg {
grid-area: 1 / 1;
}

.axis small {
font: 10px/8px "DejaVu Sans", sans-serif;
text-align: left;
}

.arrow {
width: 8px;
height: 8px;
}

.sep {
flex: none;
width: 1px;
height: 18px;
margin: 0 3px 0 4px;
background: #aca899;
}

.solver b {
margin: 4px 0 0 -9px;
font: bold 11px/16px "DejaVu Sans Condensed", sans-serif;
}

.red {
color: #900000;
}

.green {
color: #007000;
}

.navy {
color: #000090;
}

.gray {
color: #aca899;
}

.combo {
display: grid;
width: 100px;
height: 20px;
border: 1px solid #7f9db9;
background: #fff;
}

.combo select, .combo-arrow {
grid-area: 1 / 1;
}

.combo select {
appearance: none;
padding-left: 3px;
font-size: 12px;
font-weight: bold;
}

.combo-arrow {
justify-self: end;
width: 16px;
height: 16px;
margin: 1px;
border-radius: 2px;
background: #c1d3fb;
pointer-events: none;
}

/* workspace */
.workspace {
flex: 1;
min-height: 0;
display: flex;
}

.tree-pane {
flex: none;
width: 216px;
display: flex;
flex-direction: column;
padding: 3px 8px 0 4px;
border-right: 1px solid #000;
}

.pane-head {
display: flex;
align-items: center;
gap: 2px;
height: 12px;
margin-bottom: 1px;
padding-right: 2px;
}

.lines {
flex: 1;
}

.pane-head .lines {
height: 6px;
border: 1px solid #aca899;
border-left: none;
border-right: none;
}

.mini {
flex: none;
display: flex;
align-items: center;
justify-content: center;
width: 12px;
height: 12px;
border: 1px solid #fff;
border-right-color: #716f64;
border-bottom-color: #716f64;
}

.mini svg {
width: 6px;
height: 6px;
shape-rendering: auto;
}

.tree {
flex: 1;
margin: 0;
padding: 2px 0 0 2px;
list-style: none;
border: 1px solid #716f64;
border-right-color: #fff;
border-bottom-color: #fff;
background: #fff;
color: #222;
font: 12px/16px "DejaVu Sans Condensed", sans-serif;
}

.tree li {
display: flex;
align-items: center;
height: 16px;
}

.tree i {
flex: none;
display: flex;
align-items: center;
width: 19px;
height: 16px;
background: repeating-linear-gradient(#999 0 1px, transparent 1px 2px) 9px 0 / 1px 0 no-repeat;
}

.tree .v, .tree .t {
background-size: 1px 16px;
}

.tree .last {
background-size: 1px 8px;
}

.tree .first {
background-size: 1px 8px;
background-position: 9px 8px;
}

.tree .t::after, .tree .last::after, .tree .first::after {
content: "";
flex: 1;
height: 1px;
margin-left: 9px;
background: repeating-linear-gradient(90deg, #999 0 1px, transparent 1px 2px);
}

.tree button {
flex: none;
width: 9px;
height: 9px;
margin: 0 -9px 0 5px;
border: 1px solid #7b9ebd;
border-radius: 1px;
background: #fff;
color: #000;
font: bold 9px/7px "DejaVu Sans", sans-serif;
}

.tree span {
margin-left: 3px;
padding: 0 3px;
white-space: nowrap;
}

.sel {
background: #ece9d8;
}

.document {
flex: 1;
min-width: 0;
display: flex;
flex-direction: column;
padding: 7px 7px 0 8px;
}

.frame {
flex: 1;
min-height: 0;
display: flex;
padding: 4px 5px 6px 4px;
border: 1px solid #fff;
border-right-color: #000;
border-bottom-color: #000;
}

.canvas {
flex: 1;
min-width: 0;
border: 1px solid #716f64;
border-right-color: #fff;
border-bottom-color: #fff;
background: #fff;
}

.canvas svg {
width: 100%;
height: 100%;
stroke: #000;
}

.canvas .slot {
stroke: #20c0c0;
stroke-width: 2;
shape-rendering: auto;
}

.canvas .axes {
stroke: #c8ffff;
}

.axis-text {
fill: #c8ffff;
stroke: none;
font: 12px "DejaVu Sans", sans-serif;
}

.doc-tabs {
display: flex;
align-items: flex-start;
height: 25px;
padding-left: 4px;
}

.doc-tabs button {
display: flex;
align-items: center;
gap: 2px;
height: 21px;
padding: 0 2px 0 1px;
border: 1px solid #000;
border-top: none;
border-left: none;
}

.doc-tabs .active {
position: relative;
gap: 4px;
height: 23px;
margin-top: -1px;
background: #ece9d8;
}

.splitter {
flex: none;
height: 7px;
border-top: 1px solid #aca899;
border-bottom: 1px solid #000;
box-shadow: inset 0 1px #fff;
}

/* docked panes */
.bottom {
flex: none;
display: grid;
grid-template-columns: 799fr 641fr;
height: 143px;
border-bottom: 1px solid #aca899;
}

.params, .messages {
min-width: 0;
display: flex;
gap: 3px;
padding: 4px 10px 6px 4px;
}

.params {
border-right: 1px solid #000;
}

.messages {
padding-left: 3px;
padding-right: 4px;
}

.side-head {
flex: none;
display: flex;
flex-direction: column;
align-items: center;
gap: 1px;
width: 12px;
}

.side-head .lines {
width: 6px;
margin-top: 2px;
border: 1px solid #aca899;
border-top: none;
border-bottom: none;
}

.param-box, .message-box {
flex: 1;
min-width: 0;
display: flex;
border: 1px solid #716f64;
border-right-color: #fff;
border-bottom-color: #fff;
background: #fff;
}

.param-box {
flex-direction: column;
}

.param-body {
flex: 1;
display: flex;
align-items: flex-start;
}

table {
flex: 1;
table-layout: fixed;
border-collapse: separate;
border-spacing: 0;
}

th {
width: 20%;
height: 20px;
padding: 0 4px 2px;
border-right: 1px solid #aca899;
border-bottom: 1px solid #aca899;
box-shadow: inset 1px 1px #fff;
background: #ece9d8;
font-weight: normal;
text-align: left;
}

.wide {
width: 40%;
}

td {
height: 20px;
padding: 0;
border-right: 1px solid #d8d5c8;
border-bottom: 1px solid #d8d5c8;
}

td input {
display: block;
width: 100%;
padding: 0 4px;
}

.type {
display: flex;
height: 19px;
}

.type select {
flex: 1;
appearance: none;
padding: 0 4px 3px;
}

.type span {
display: flex;
align-items: center;
justify-content: center;
width: 16px;
border: 1px solid #fff;
border-right-color: #aca899;
border-bottom-color: #aca899;
background: #ece9d8;
}

.scroll {
flex: none;
align-self: stretch;
display: flex;
flex-direction: column;
justify-content: space-between;
width: 17px;
border-left: 1px solid #eeede5;
}

.scroll button {
width: 16px;
height: 16px;
border: 1px solid #e0ddd0;
border-radius: 2px;
background: #f5f4ee;
}

.scroll svg {
width: 14px;
height: 14px;
shape-rendering: auto;
}

.sheet-tabs {
height: 17px;
border-top: 1px solid #000;
background: #ece9d8;
}

.sheet-tabs button {
display: flex;
height: 17px;
margin-top: -1px;
}

.sheet-tabs svg {
width: 6px;
height: 17px;
shape-rendering: auto;
}

.sheet-tabs b {
padding: 0 3px;
background: #fff;
font: bold 11px/18px "Open Sans", sans-serif;
}

.message-box textarea {
flex: 1;
resize: none;
}

/* status bar */
.statusbar {
flex: none;
display: flex;
height: 19px;
border-top: 1px solid #aca899;
border-bottom: 2px solid #316ac5;
background: linear-gradient(#d8d5c5, #ece9d8 4px);
line-height: 18px;
}

.statusbar p {
flex: 1;
margin: 0;
padding-left: 2px;
}

.statusbar span {
padding: 0 9px 0 10px;
border-left: 1px solid #c5c2b2;
box-shadow: inset 1px 0 #fff;
}
```
